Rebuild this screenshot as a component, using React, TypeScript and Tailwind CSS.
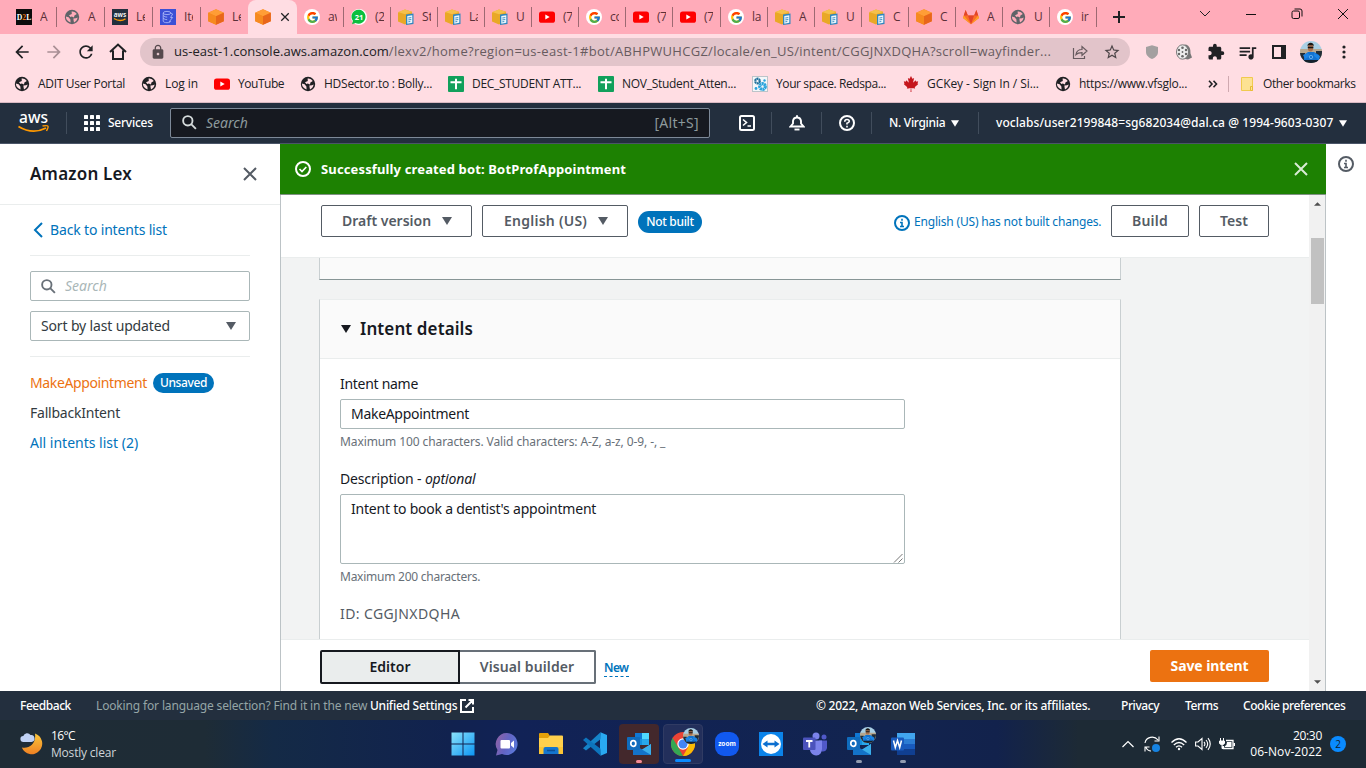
import React from 'react';
import { FcGoogle } from 'react-icons/fc';
import { FaCanadianMapleLeaf } from 'react-icons/fa';
import { MdPublic, MdExtension, MdQueueMusic, MdLock, MdStarBorder, MdRefresh, MdArrowBack, MdArrowForward } from 'react-icons/md';

const Globe = ({ dark }: { dark?: boolean }) => (
  <svg viewBox="0 0 16 16" className="size-4">
    <circle cx="8" cy="8" r="7.2" fill={dark ? '#202124' : '#5f6368'} />
    <path d="M1.8 7.6 4.600 8.200 6.400 10.600 6.600 13.600Q2.200 12 1.800 7.600ZM7.600 2.600Q11 2 12.800 5L10.400 6.600 10 8.400 7.800 7.600 6.400 8 5 6.200 7.800 5Z M9.400 9.400 12 9.200 13.600 8.600Q13.200 12 10 13.400L9.600 11.600Z" fill={dark ? '#ffdde3' : '#ffabb9'} />
  </svg>
);
const Cube = () => (
  <svg viewBox="0 0 16 16" className="size-4">
    <path d="m8 .2 7.800 3.600v8.400L8 15.800.2 12.200V3.800Z" fill="#f58220" />
    <path d="m8 .2 7.800 3.600L8 7.200.2 3.800Z" fill="#ff9d36" />
    <path d="M8 7.200.2 3.800v8.400L8 15.800Z" fill="#f68a1f" />
    <path d="m8 7.200 7.800-3.400v8.400L8 15.800Z" fill="#e8661a" />
  </svg>
);
const YellowBox = () => (
  <svg viewBox="0 0 16 16" className="size-4">
    <path d="m7 .5 7 2.300v9L7 15.500 0 12.500v-9Z" fill="#e9a826" />
    <path d="m0 3 7 2.300L14.500 3 7 .5Z" fill="#f5c04b" />
    <path d="m8 5.500 7.500-1V15L8 16Z" fill="#2f87bf" />
    <path d="m9.300 7 5-.8v7.600l-5 .9Z" fill="#eef7fc" />
    <path d="m10.300 9 3-.4m-3 2.300 3-.4m-3 2.300 2-.3" stroke="#2f87bf" strokeWidth=".9" />
  </svg>
);
const YouTube = () => (
  <svg viewBox="0 0 16 16" className="size-4">
    <rect y="2.400" width="16" height="11.400" rx="2.600" fill="#f00" />
    <path d="M6.300 5.600v5l4.400-2.500Z" fill="#fff" />
  </svg>
);
const Google = () => (
  <span className="flex size-4 items-center justify-center rounded-full bg-white"><FcGoogle className="size-[13px]" /></span>
);
const WhatsApp = () => (
  <svg viewBox="0 0 16 16" className="size-4">
    <circle cx="8" cy="8" r="8" fill="#fff" />
    <path d="M1 15.300 2 12A7 7 0 1 1 4.500 14Z" fill="#0cbf3f" />
    <text x="8" y="10.700" textAnchor="middle" fontSize="7.500" fontWeight="700" fontFamily="Open Sans, sans-serif" fill="#fff">21</text>
  </svg>
);
const Gitlab = () => (
  <svg viewBox="0 0 16 16" className="size-4">
    <path d="M0 9 2.600 1l2.300 5.500h6.200L13.400 1 16 9l-8 6.200Z" fill="#fc6d26" />
    <path d="m4.900 6.500 3.100 8.700 3.100-8.700ZM2.600 1 .8 6.500h4.100ZM13.400 1l1.800 5.500h-4.100Z" fill="#e24329" />
    <path d="M.8 6.500 0 9l8 6.200Zm14.400 0L16 9l-8 6.200Z" fill="#fca326" />
  </svg>
);
const D2L = () => (
  <svg viewBox="0 0 16 16" className="size-4">
    <rect width="16" height="16" fill="#0c0c0c" />
    <text x="8" y="11" textAnchor="middle" textLength="14.500" lengthAdjust="spacingAndGlyphs" fontSize="8.500" fontWeight="700" fontFamily="Liberation Serif, serif" fill="#fff">D<tspan fill="#e87511">2</tspan>L</text>
  </svg>
);
const AwsTiny = () => (
  <svg viewBox="0 0 16 16" className="size-4">
    <rect width="16" height="16" fill="#232f3e" />
    <text x="8" y="7.600" textAnchor="middle" fontSize="6.500" fontWeight="600" fontFamily="Noto Sans, sans-serif" fill="#fff">aws</text>
    <path d="M2 9.500q6 3.800 11.500.4" stroke="#f90" strokeWidth="1.300" fill="none" />
  </svg>
);
const Dynamo = () => (
  <svg viewBox="0 0 16 16" className="size-4">
    <rect width="16" height="16" fill="#3b50d6" />
    <g fill="none" stroke="#b5c0fb" strokeWidth=".8">
      <ellipse cx="7" cy="4" rx="3.800" ry="1.600" />
      <path d="M3.200 4v8c0 1 1.600 1.700 3.800 1.700s3.800-.7 3.800-1.700M3.200 6.700q2 1.500 4 1.400M3.200 9.300q2 1.500 4 1.400M10.800 4l1.800 1-2 3.500h2L9 13" />
    </g>
  </svg>
);
const Sheets = () => (
  <svg viewBox="0 0 16 16" className="size-4">
    <rect width="16" height="16" rx="1" fill="#11a05b" />
    <path d="M2.500 6.200h11M8 2.800v10.400" stroke="#fff" strokeWidth="2" />
  </svg>
);
const Gears = () => (
  <svg viewBox="0 0 16 16" className="size-4">
    <rect x=".5" y=".5" width="15" height="15" fill="#f4f7f9" stroke="#bcc4c9" />
    <circle cx="5.500" cy="5" r="2.300" fill="none" stroke="#1d6f9b" strokeWidth="2.200" strokeDasharray="1.800 .4" />
    <circle cx="10.500" cy="10.500" r="2.800" fill="none" stroke="#2aa3dc" strokeWidth="3.200" strokeDasharray="2 .4" />
    <circle cx="12.500" cy="4.500" r="1.200" fill="#2aa3dc" /><circle cx="4" cy="12.500" r="1.400" fill="#2aa3dc" />
  </svg>
);
const Avatar = ({ cls }: { cls: string }) => (
  <svg viewBox="0 0 22 22" className={cls}>
    <clipPath id="face"><circle cx="11" cy="11" r="11" /></clipPath>
    <g clipPath="url(#face)">
      <rect width="22" height="22" fill="#a9cfe4" />
      <path d="M0 8h22v14H0Z" fill="#b7a78f" />
      <path d="M0 12h5l2 10H0ZM16 10h6v12h-6Z" fill="#222d38" />
      <path d="M4 20V14l4-3h6l5 3v5Z" fill="#1272d0" />
      <path d="m3 14 5-2 2 3-5 3ZM14 12l6 3-1 4-5-4Z" fill="#1a84e6" />
      <path d="M4 19h14v3H4Z" fill="#14202c" />
      <ellipse cx="10.500" cy="6.500" rx="2.800" ry="3.900" fill="#a8714f" />
      <path d="M7.400 5.500C7 .5 14.500.5 13.800 5.500L13 4.300H8Z" fill="#1c1714" />
      <path d="M7.900 5.700h5.400v1.500H7.900Z" fill="#161616" />
      <circle cx="11" cy="16" r="1.700" fill="none" stroke="#7fc1f5" strokeWidth=".7" />
    </g>
  </svg>
);
const Close = ({ cls }: { cls: string }) => (
  <svg viewBox="0 0 16 16" className={cls} fill="none" stroke="currentColor" strokeWidth="2"><path d="m2 2 12 12M14 2 2 14" /></svg>
);
const Lens = ({ cls }: { cls: string }) => (
  <svg viewBox="0 0 16 16" className={cls} fill="none" stroke="currentColor" strokeWidth="2"><circle cx="6.200" cy="6.200" r="5" /><path d="m9.800 9.800 5 5" /></svg>
);
const Caret = ({ cls }: { cls: string }) => (
  <svg viewBox="0 0 10 8" className={cls} fill="currentColor"><path d="M0 0h10L5 8Z" /></svg>
);
const Info = ({ cls }: { cls: string }) => (
  <svg viewBox="0 0 16 16" className={cls} fill="none" stroke="currentColor" strokeWidth="2"><circle cx="8" cy="8" r="7" /><path d="M8 3.800v2M6 7.500h2V12M6 11.500h4" strokeWidth="1.600" /></svg>
);

type Tab = { icon: React.ReactNode; label: string };
const leftTabs: Tab[] = [
  { icon: <D2L />, label: 'A' }, { icon: <Globe />, label: 'A' }, { icon: <AwsTiny />, label: 'Le' }, { icon: <Dynamo />, label: 'Ite' }, { icon: <Cube />, label: 'Le' },
];
const rightTabs: Tab[] = [
  { icon: <Google />, label: 'aw' }, { icon: <WhatsApp />, label: '(2' }, { icon: <YellowBox />, label: 'St' }, { icon: <YellowBox />, label: 'La' }, { icon: <YellowBox />, label: 'U' },
  { icon: <YouTube />, label: '(7' }, { icon: <Google />, label: 'co' }, { icon: <YouTube />, label: '(7' }, { icon: <YouTube />, label: '(7' }, { icon: <Google />, label: 'la' },
  { icon: <YellowBox />, label: 'A' }, { icon: <YellowBox />, label: 'U' }, { icon: <YellowBox />, label: 'C' }, { icon: <Cube />, label: 'C' }, { icon: <Gitlab />, label: 'A' }, { icon: <Globe />, label: 'U' }, { icon: <Google />, label: 'ir' },
];

const TabItem = ({ tab, w, line = true }: { tab: Tab; w: string; line?: boolean }) => (
  <div className={`flex h-5 shrink-0 items-center border-r pl-[7px] ${w} ${line ? 'border-[#9d6972]' : 'border-transparent'}`}>
    <span className="shrink-0">{tab.icon}</span>
    <span className="ml-2 w-[9px] overflow-hidden text-[12px] tracking-[-0.2px] whitespace-nowrap text-[#5b3038]">{tab.label}</span>
  </div>
);

const bookmarks = [
  { icon: <Globe dark />, label: 'ADIT User Portal', w: 'w-[127px]', t: 'tracking-[-0.31px]' },
  { icon: <Globe dark />, label: 'Log in', w: 'w-[73px]', t: 'tracking-[-0.1px]' },
  { icon: <YouTube />, label: 'YouTube', w: 'w-[86px]', t: 'tracking-[-0.47px]' },
  { icon: <Globe dark />, label: 'HDSector.to : Bolly...', w: 'w-[148px]', t: 'tracking-[-0.25px]' },
  { icon: <Sheets />, label: 'DEC_STUDENT ATT...', w: 'w-[150px]', t: 'tracking-[-0.3px]' },
  { icon: <Sheets />, label: 'NOV_Student_Atten...', w: 'w-[154px]', t: 'tracking-[-0.28px]' },
  { icon: <Gears />, label: 'Your space. Redspa...', w: 'w-[151px]', t: 'tracking-[-0.4px]' },
  { icon: <FaCanadianMapleLeaf className="size-4 text-[#c5161d]" />, label: 'GCKey - Sign In / Si...', w: 'w-[152px]', t: 'tracking-[-0.07px]' },
  { icon: <Globe dark />, label: 'https://www.vfsglo...', w: 'w-[153px]', t: 'tracking-[-0.28px]' },
];

function Browser() {
  return (
    <div className="flex h-[103px] shrink-0 flex-col border-b border-[#d9b9c2] bg-[#ffdde3] font-['Open_Sans','Noto_Sans',sans-serif] text-[#202124]">
      <div className="flex h-[34px] shrink-0 items-center bg-[#ffabb9] pl-[9px]">
        {leftTabs.map((t, i) => <TabItem key={i} tab={t} line={i < 4} w={i === 4 ? 'w-[47px]' : 'w-12'} />)}
        <div className="flex h-[34px] w-[49px] shrink-0 items-center gap-[9px] rounded-t-lg bg-[#ffdde3] pl-[7px]">
          <Cube />
          <Close cls="size-2.5" />
        </div>
        {rightTabs.map((t, i) => <TabItem key={i} tab={t} w={i % 17 === 8 ? 'w-12' : 'w-[47px]'} />)}
        <svg viewBox="0 0 12 12" className="ml-4 size-3 shrink-0" stroke="#202124" strokeWidth="2"><path d="M6 0v12M0 6h12" /></svg>
        <svg viewBox="0 0 12 8" className="mt-[-6px] ml-[74px] h-2 w-3 shrink-0" fill="none" stroke="#202124"><path d="m1 1 5 5 5-5" /></svg>
        <svg viewBox="0 0 12 12" className="mt-[-6px] ml-[34px] size-3 shrink-0" stroke="#111"><path d="M1 6.500h10" /></svg>
        <svg viewBox="0 0 12 12" className="mt-[-6px] ml-[34px] size-3 shrink-0" fill="none" stroke="#111"><rect x="1" y="3" width="7.500" height="7.500" rx="1.500" /><path d="M3.500 1H9q2 0 2 2v5.500" /></svg>
        <svg viewBox="0 0 12 12" className="mt-[-6px] ml-[34px] size-3 shrink-0" stroke="#111"><path d="m1 1 10 10M11 1 1 11" /></svg>
      </div>
      <div className="flex h-9 shrink-0 items-center pl-3">
        <MdArrowBack className="size-5" />
        <MdArrowForward className="ml-3 size-5 text-[#a98f95]" />
        <MdRefresh className="ml-3 size-5" />
        <svg viewBox="0 0 20 20" className="ml-3 size-5" fill="none" stroke="currentColor" strokeWidth="2"><path d="m2 10 8-7.500 8 7.500M5 8.500v8.500h10V8.500" /></svg>
        <div className="ml-3 flex h-7 w-[990px] items-center rounded-full bg-[#e2c4ca] pl-[10px]">
          <MdLock className="size-4 text-[#54484c]" />
          <div className="ml-2 w-[878px] text-[13px] whitespace-nowrap text-[#675b5f]"><span className="tracking-[0.04px] text-[#202124]">us-east-1.console.aws.amazon.com</span><span className="tracking-[0.29px]">/lexv2/home?region=us-east-1#bot/ABHPWUHCGZ/locale/en_US/intent/CGGJNXDQHA?scroll=wayfinder...</span></div>
          <svg viewBox="0 0 16 16" className="ml-5 size-4" fill="none" stroke="#665a5e" strokeWidth="1.200"><path d="M1.500 4v10.500h11V12M4 10.500c.5-3.500 2.500-5 6-5V2.500L15 7l-5 4.500V8.700c-3 0-4.700.5-6 1.800Z" /></svg>
          <MdStarBorder className="ml-[15px] size-[18px] text-[#4d4548]" />
        </div>
        <svg viewBox="0 0 16 16" className="ml-[14px] size-4"><path d="M8 1.200 14 3v5c0 3.500-3 5.800-6 7-3-1.200-6-3.500-6-7V3Z" fill="#a3a0a0" /></svg>
        <svg viewBox="0 0 16 16" className="ml-4 size-4"><path d="M7 1 10 .5q5 2 4.500 9l1.500 4-4 2-4-.7Z" fill="#777" /><ellipse cx="6.500" cy="8" rx="6" ry="7.200" fill="#eee" stroke="#777" /><g fill="#666"><circle cx="6.500" cy="8" r=".9" /><circle cx="6.500" cy="3.700" r="1.300" /><circle cx="6.500" cy="12.300" r="1.300" /><circle cx="3" cy="6" r="1.200" /><circle cx="10" cy="6" r="1.200" /><circle cx="3" cy="10" r="1.200" /><circle cx="10" cy="10" r="1.200" /></g></svg>
        <MdExtension className="ml-[15px] size-[18px]" />
        <MdQueueMusic className="ml-3 size-[21px]" />
        <svg viewBox="0 0 14 14" className="ml-[14px] size-3.5"><path fillRule="evenodd" d="M0 0h14v14H0ZM2 2v10h7V2Z" fill="#202124" /></svg>
        <Avatar cls="ml-[14px] size-[22px]" />
        <svg viewBox="0 0 4 14" className="ml-[20px] h-3.5 w-1" fill="#202124"><circle cx="2" cy="2" r="1.600" /><circle cx="2" cy="7" r="1.600" /><circle cx="2" cy="12" r="1.600" /></svg>
      </div>
      <div className="flex h-[28px] shrink-0 items-center pl-[14px] text-[12px] whitespace-nowrap">
        {bookmarks.map((b) => (
          <div key={b.label} className={`flex shrink-0 items-center gap-2 ${b.w}`}>
            <span className="shrink-0">{b.icon}</span>
            <span className={b.t}>{b.label}</span>
          </div>
        ))}
        <svg viewBox="0 0 10 8" className="h-2 w-2.5 shrink-0" fill="none" stroke="#202124" strokeWidth="1.600"><path d="m1 .8 3 3.200-3 3.200M5.500.8l3 3.200-3 3.200" /></svg>
        <span className="ml-[10px] h-4 w-px bg-[#cfa9b0]" />
        <svg viewBox="0 0 12 14" className="ml-3 h-3.5 w-3 shrink-0"><path d="M.5.500h11v13H.5Z" fill="#fde293" stroke="#f0ca4e" /><path d="M9.500 9.500h2v4h-2Z" fill="#fde293" stroke="#e8bb35" /></svg>
        <span className="ml-[10px] tracking-[-0.4px]">Other bookmarks</span>
      </div>
    </div>
  );
}

function AwsHeader() {
  return (
    <div className="flex h-[41px] shrink-0 items-center border-b border-[#4a5568] bg-[#232f3e] font-medium whitespace-nowrap text-white">
      <svg viewBox="0 0 32 22" className="ml-[18px] h-[22px] w-8">
        <text x="15.500" y="11" textAnchor="middle" textLength="29" lengthAdjust="spacingAndGlyphs" fontSize="17" fontWeight="500" fontFamily="Noto Sans, sans-serif" fill="#fff">aws</text>
        <path d="M.5 14.500q14 8.500 27.500 1.500" fill="none" stroke="#f90" strokeWidth="1.900" /><path d="M24.500 14q5-.8 5.500.2t-1.500 4.800" fill="none" stroke="#f90" strokeWidth="1.400" />
      </svg>
      <span className="ml-4 h-[22px] w-px bg-[#414d5c]" />
      <svg viewBox="0 0 16 16" className="ml-[17px] size-4" fill="#fff">{[0, 6, 12].map((y) => [0, 6, 12].map((x) => <rect key={`${x}-${y}`} x={x} y={y} width="4" height="4" rx=".6" />))}</svg>
      <span className="ml-2 w-[62px] text-[12px] tracking-[-0.25px]">Services</span>
      <div className="flex h-[30px] w-[540px] items-center rounded-[2px] border border-[#7d8998] bg-[#161920] px-[10px] pb-px text-[14px] font-normal text-[#8d9a9c]">
        <Lens cls="ml-px size-[15px] text-[#d5dbdb]" />
        <span className="ml-[9px] flex-1 italic">Search</span>
        <span className="tracking-[0.3px]">[Alt+S]</span>
      </div>
      <svg viewBox="0 0 16 16" className="ml-[29px] size-4" fill="none" stroke="#fff" strokeWidth="2"><rect x="1" y="1" width="14" height="14" rx="1.500" /><path d="m4 4.500 3.500 3L4 10.500M8.500 11H12" strokeWidth="1.600" /></svg>
      <span className="ml-4 h-[22px] w-px bg-[#414d5c]" />
      <svg viewBox="0 0 16 16" className="ml-[17px] size-4" fill="none" stroke="#fff" strokeWidth="1.900"><path d="M8 .2v2M1.500 11.500 4 8.500V6Q4.500 2.500 8 2.500T12 6v2.500l2.500 3Z" /><path d="M5.500 14.500h5" /></svg>
      <span className="ml-4 h-[22px] w-px bg-[#414d5c]" />
      <svg viewBox="0 0 16 16" className="ml-[17px] size-4" fill="none" stroke="#fff" strokeWidth="2"><circle cx="8" cy="8" r="7" /><path d="M5.700 6.700Q5.800 4.500 8 4.500t2.300 1.800Q10.300 7.500 8 8.300v1.300M8 10.800v1.700" strokeWidth="1.600" /></svg>
      <span className="ml-4 h-[22px] w-px bg-[#414d5c]" />
      <span className="ml-[17px] w-[62px] text-[12px] tracking-[-0.3px]">N. Virginia</span>
      <Caret cls="h-[7px] w-2" />
      <span className="ml-[19px] h-[22px] w-px bg-[#414d5c]" />
      <span className="ml-[17px] w-[343px] text-[12px] tracking-[0.07px]">voclabs/user2199848=sg682034@dal.ca @ 1994-9603-0307</span>
      <Caret cls="h-[7px] w-2" />
    </div>
  );
}

function Sidebar() {
  return (
    <div className="w-[280px] shrink-0 bg-white text-[14px] text-[#333b40]">
      <div className="flex h-[61px] items-center justify-between border-b border-[#eaeded] pr-[22px] pl-[30px]">
        <span className="text-[17px] font-semibold tracking-[0.2px] text-[#16191f]">Amazon Lex</span>
        <Close cls="size-4 text-[#545b64]" />
      </div>
      <div className="px-[30px]">
        <div className="flex h-[51px] items-center border-b border-[#eaeded] text-[#0073bb]">
          <svg viewBox="0 0 10 16" className="ml-[3px] h-4 w-2.5" fill="none" stroke="currentColor" strokeWidth="2"><path d="M9 1 2 8l7 7" /></svg>
          <span className="mb-0.5 ml-[7px] tracking-[-0.16px]">Back to intents list</span>
        </div>
        <div className="mt-[15px] flex h-[30px] items-center rounded-[2px] border border-[#aab7b8] px-[10px]">
          <Lens cls="size-[15px] text-[#687078]" />
          <span className="mb-0.5 ml-[9px] text-[#aab7b8] italic">Search</span>
        </div>
        <div className="mt-[10px] flex h-[30px] items-center justify-between rounded-[2px] border border-[#aab7b8] pr-[13px] pl-[10px]">
          <span className="mb-0.5 tracking-[-0.15px]">Sort by last updated</span>
          <Caret cls="h-2 w-2.5 text-[#545b64]" />
        </div>
        <div className="mt-[15px] border-t border-[#eaeded]" />
        <div className="mt-[15px] flex h-[22px] items-center">
          <span className="mb-0.5 w-[123px] tracking-[-0.37px] text-[#ec7211]">MakeAppointment</span>
          <span className="flex h-5 w-[61px] items-center justify-center rounded-full bg-[#0073bb] text-[12px] font-medium tracking-[-0.4px] text-white">Unsaved</span>
        </div>
        <div className="mt-[8px] leading-[22px] tracking-[-0.22px]">FallbackIntent</div>
        <div className="mt-[8px] leading-[22px] text-[#0073bb]">All intents list (2)</div>
      </div>
    </div>
  );
}

function Content() {
  return (
    <div className="flex w-[1046px] shrink-0 flex-col border-x border-[#bcc3c6]">
      <div className="-mx-px flex h-[51px] shrink-0 items-center border-b border-[#7f9183] bg-[#1d8102] pr-[17px] pl-[15px] text-white">
        <svg viewBox="0 0 16 16" className="size-4" fill="none" stroke="#fff" strokeWidth="2"><circle cx="8" cy="8" r="7" /><path d="m4.500 8 2.500 2.500 4.300-4.500" strokeWidth="1.700" /></svg>
        <span className="mt-px ml-[10px] flex-1 text-[13px] font-bold tracking-[0.14px]">Successfully created bot: BotProfAppointment</span>
        <Close cls="size-4 text-[#d9ecd5]" />
      </div>
      <div className="flex min-h-0 flex-1">
        <div className="flex w-[1028px] flex-col">
          <div className="flex h-[63px] shrink-0 items-start border-b border-[#eaeded] bg-white pt-[10px] pl-10 text-[14px] font-semibold whitespace-nowrap text-[#545b64]">
            <div className="flex h-8 w-[151px] items-center rounded-[2px] border border-[#545b64] pl-5"><span className="mb-0.5 w-[100px]">Draft version</span><Caret cls="h-2 w-2.5" /></div>
            <div className="ml-[10px] flex h-8 w-[146px] items-center rounded-[2px] border border-[#545b64] pl-[21px]"><span className="mb-0.5 w-[94px] tracking-[0.25px]">English (US)</span><Caret cls="h-2 w-2.5" /></div>
            <span className="mt-[6px] ml-[10px] flex h-[22px] w-16 items-center justify-center rounded-full bg-[#0073bb] text-[12px] font-medium tracking-[-0.3px] text-white">Not built</span>
            <Info cls="mt-[10px] ml-48 size-4 text-[#0073bb]" />
            <span className="mt-[7px] ml-1 w-[197px] text-[12px] leading-5 font-normal tracking-[-0.18px] text-[#0073bb]">English (US) has not built changes.</span>
            <div className="flex h-8 w-[78px] items-center justify-center rounded-[2px] border border-[#545b64] pb-0.5 tracking-[0.2px]">Build</div>
            <div className="ml-[10px] flex h-8 w-[70px] items-center justify-center rounded-[2px] border border-[#545b64] pb-0.5 tracking-[0.1px]">Test</div>
          </div>
          <div className="min-h-0 flex-1 overflow-hidden bg-[#f2f3f3] pl-[38px]">
            <div className="h-[22px] w-[802px] border-x border-b border-x-[#c9cfd1] border-b-[#879596] bg-[#fafafa]" />
            <div className="mt-[19px] h-[400px] w-[802px] border border-[#c9cfd1] border-t-[#eaeded] bg-white text-[14px] text-[#16191f]">
              <div className="flex h-[59px] items-center border-b border-[#eaeded] bg-[#fafafa] pl-[21px]">
                <Caret cls="h-2 w-2.5" />
                <span className="mb-px ml-[9px] text-[17px] font-semibold tracking-[0.1px]">Intent details</span>
              </div>
              <div className="pt-[14px] pl-[20px]">
                <div className="leading-[22px] tracking-[-0.29px]">Intent name</div>
                <div className="mt-[4px] flex h-[30px] w-[565px] items-center rounded-[2px] border border-[#aab7b8] pb-px pl-[10px] tracking-[-0.3px]">MakeAppointment</div>
                <div className="mt-[3px] text-[12px] leading-5 tracking-[-0.1px] text-[#687078]">Maximum 100 characters. Valid characters: A-Z, a-z, 0-9, -, _</div>
                <div className="mt-[16px] leading-[22px] tracking-[-0.16px]">Description - <i>optional</i></div>
                <div className="relative mt-[4px] h-[70px] w-[565px] rounded-[2px] border border-[#aab7b8] pt-[3px] pl-[10px] leading-[22px] tracking-[-0.22px]">
                  Intent to book a dentist's appointment
                  <svg viewBox="0 0 10 10" className="absolute right-px bottom-0 size-2.5" stroke="#777"><path d="M1 9.500 9.500 1M5.500 9.500l4-4" /></svg>
                </div>
                <div className="mt-[3px] text-[12px] leading-5 tracking-[-0.25px] text-[#687078]">Maximum 200 characters.</div>
                <div className="mt-[16px] leading-[22px] tracking-[0.4px] text-[#545b64]">ID: CGGJNXDQHA</div>
              </div>
            </div>
          </div>
          <div className="flex h-[52px] shrink-0 items-start border-t border-[#eaeded] bg-white pt-[10px] pr-10 pl-[39px] text-[14px] font-semibold">
            <div className="flex h-[34px] w-[140px] items-center justify-center rounded-l-[2px] border-2 border-[#16191f] bg-[#eaeded] pb-px tracking-[0.05px] text-[#16191f]">Editor</div>
            <div className="flex h-[34px] w-[136px] items-center justify-center rounded-r-[2px] border-2 border-l-0 border-[#687078] pb-px tracking-[0.1px] text-[#545b64]">Visual builder</div>
            <span className="mt-[9px] ml-2 h-[18px] w-[25px] border-b border-dashed border-[#0073bb] text-[12px] leading-[17px] tracking-[-0.6px] text-[#0073bb]">New</span>
            <div className="ml-auto flex h-8 w-[119px] items-center justify-center rounded-[2px] bg-[#ec7211] pb-px font-bold tracking-[-0.1px] text-white">Save intent</div>
          </div>
        </div>
        <div className="flex w-4 flex-col items-center bg-[#f1f1f1] text-[#505050]">
          <svg viewBox="0 0 8 4" className="mt-[7px] h-1 w-[7px]" fill="currentColor"><path d="M0 4h8L4 0Z" /></svg>
          <div className="mt-8 h-[66px] w-[13px] bg-[#c1c1c1]" />
          <svg viewBox="0 0 8 4" className="mt-auto mb-[7px] h-1 w-[7px]" fill="currentColor"><path d="M0 0h8L4 4Z" /></svg>
        </div>
      </div>
    </div>
  );
}

const Mail = () => (
  <svg viewBox="0 0 24 24" className="size-6">
    <path d="M8 1h14v12H8Z" fill="#1490df" /><path d="M15 1h7v6h-7Z" fill="#50d9ff" /><path d="M15 7h7v6h-7Z" fill="#28a8ea" /><path d="M8 1h7v6H8Z" fill="#0f78d4" />
    <path d="m6 12 9 6 9-6v11H6Z" fill="#1ba5e8" /><path d="m24 12-18 11h18Z" fill="#3aaeea" /><path d="m6 12 18 11H6Z" fill="#1373c9" />
    <rect y="5" width="13" height="13" rx="1" fill="#0f6cbd" />
    <ellipse cx="6.300" cy="11.500" rx="2.500" ry="2.900" fill="none" stroke="#fff" strokeWidth="1.700" />
  </svg>
);
const taskIcons = [
  { bar: '', bg: '', el: <svg viewBox="0 0 24 24" className="size-6"><linearGradient id="win" x2="1" y2="1"><stop stopColor="#8be3fb" /><stop offset="1" stopColor="#0c96f4" /></linearGradient><path d="M.5.500h11v11H.5ZM12.500.500h11v11h-11ZM.5 12.500h11v11H.5ZM12.500 12.500h11v11h-11Z" fill="url(#win)" /></svg> },
  { bar: '', bg: '', el: <svg viewBox="0 0 24 24" className="size-6"><linearGradient id="chat" x1="0" y1=".3" x2="1" y2=".7"><stop stopColor="#8c62a8" /><stop offset=".5" stopColor="#6264c4" /><stop offset="1" stopColor="#5a7bdc" /></linearGradient><path d="M12 1a11 11 0 1 1-5 21l-6 1.500L2.500 18A11 11 0 0 1 12 1Z" fill="url(#chat)" /><rect x="5.500" y="8" width="9.500" height="8.500" rx="1" fill="#fff" /><path d="m16 11 3-2.500V16l-3-2.500Z" fill="#fff" /></svg> },
  { bar: '', bg: '', el: <svg viewBox="0 0 24 24" className="size-6"><path d="M0 2q0-1 1-1h8l2 3v5H0Z" fill="#e3a008" /><path d="M0 6h9l2-2.500h12q1 0 1 1V22H0Z" fill="#ffd04c" /><path d="M0 15h24v7H0Z" fill="#fbc535" /><path d="M4.500 22v-5q0-2 2-2h11q2 0 2 2v5Z" fill="#1476cf" /><path d="M8 18.500h8" stroke="#0b4f96" strokeWidth="1.500" /></svg> },
  { bar: '', bg: '', el: <svg viewBox="0 0 24 24" className="size-6"><path d="M17.500.2 24 3v18l-6.500 2.800-.5-6.300V6.500Z" fill="#29a9f2" /><path d="M17.500.2v7L3 18.500l-3-2.300Z" fill="#1583c9" /><path d="m0 8 3-2.500 14.500 11.300v7Z" fill="#0d74bd" /></svg> },
  { bar: 'w-1.5 bg-[#f48b97]', bg: 'bg-[#43282c]', el: <Mail /> },
  { bar: 'w-4 bg-[#0a8bff]', bg: 'bg-[#232f5b] border border-[#303b63]', badge: true, el: <svg viewBox="0 0 24 24" className="size-6"><circle cx="12" cy="12" r="12" fill="#ea4335" /><path d="M1.600 6 7 15l5 9A12 12 0 0 1 1.600 6Z" fill="#34a853" /><path d="M22.400 6H12l5.200 9L12 24A12 12 0 0 0 22.400 6Z" fill="#fbbc04" /><circle cx="12" cy="12" r="5.700" fill="#fff" /><circle cx="12" cy="12" r="4.500" fill="#4285f4" /></svg> },
  { bar: '', bg: '', el: <div className="flex size-6 items-center justify-center rounded-[9px] bg-[#1159ef] font-['Open_Sans',sans-serif] text-[6.5px] leading-none font-bold text-white">zoom</div> },
  { bar: '', bg: '', el: <svg viewBox="0 0 24 24" className="size-6"><rect width="24" height="24" fill="#0b83ea" /><circle cx="12" cy="12" r="10" fill="#fff" /><path d="m3.500 12 5-3.500v2.300h7V8.500l5 3.500-5 3.500v-2.300h-7v2.300Z" fill="#0c6fd0" /></svg> },
  { bar: '', bg: '', el: <svg viewBox="0 0 24 24" className="size-6"><circle cx="13" cy="4" r="3.500" fill="#7b83eb" /><circle cx="21" cy="5" r="2.500" fill="#5059c9" /><path d="M16 8.500h8V16q-1 4-5 3.500Z" fill="#5059c9" /><path d="M7 8.500h12V17a6 6 0 0 1-12 1Z" fill="#7b83eb" /><rect y="5.500" width="12.500" height="12.500" rx="1" fill="#4b53bc" /><path d="M3 9h6.500M6.250 9v6.500" stroke="#fff" strokeWidth="1.800" /></svg> },
  { bar: 'w-1.5 bg-[#929cb0]', bg: '', badge: true, el: <Mail /> },
  { bar: 'w-1.5 bg-[#929cb0]', bg: '', el: <svg viewBox="0 0 24 24" className="size-6"><path d="M6 1h18v6H6Z" fill="#41a5ee" /><path d="M6 7h18v5H6Z" fill="#2b7cd3" /><path d="M6 12h18v5H6Z" fill="#185abd" /><path d="M6 17h18v6H6Z" fill="#103f91" /><rect y="5.500" width="13" height="13" rx="1" fill="#185abd" /><path d="m2.500 8.500 1.800 7 2.200-7 2.200 7 1.800-7" fill="none" stroke="#fff" strokeWidth="1.500" /></svg> },
];

function Taskbar() {
  return (
    <div className="flex h-12 shrink-0 items-center bg-[linear-gradient(90deg,#1f2c36_0%,#1e2c36_15%,#142a46_20%,#11224f_33%,#112256_38%,#12244f_65%,#12224c_73%,#1d2a35_79%)] font-['Open_Sans','Noto_Sans',sans-serif] text-[12px] text-white">
      <svg viewBox="0 0 24 24" className="ml-5 size-6"><linearGradient id="moon" x2="0" y2="1"><stop stopColor="#fbc83c" /><stop offset="1" stopColor="#ef8123" /></linearGradient><path d="M15 1.500a10.600 10.600 0 1 1-13.200 14C9 17 16.500 12 15 1.500Z" fill="url(#moon)" /><path d="M3.500 10a3 3 0 0 1-.2-6A4 4 0 0 1 10.500 3a3.500 3.500 0 0 1 1 7Z" fill="#c0d2f5" /></svg>
      <div className="ml-[7px] w-[390px] leading-4"><div className="tracking-[-0.6px]">16°C</div><div className="mt-px tracking-[-0.2px] text-[#cfd4d8]">Mostly clear</div></div>
      {taskIcons.map((t, i) => (
        <div key={i} className="flex w-11 shrink-0 justify-center">
          <div className={`relative flex size-10 items-center justify-center rounded ${t.bg}`}>
            {t.el}
            {t.badge && <Avatar cls="absolute top-[3px] right-[3px] size-4" />}
            {t.bar && <span className={`absolute bottom-px h-[3px] rounded-full ${t.bar}`} />}
          </div>
        </div>
      ))}
      <svg viewBox="0 0 12 8" className="ml-[197px] h-2 w-3" fill="none" stroke="#fff" strokeWidth="1.200"><path d="m.5 7 5.500-5.500L11.500 7" /></svg>
      <svg viewBox="0 0 18 18" className="ml-[9px] size-[18px]" fill="none" stroke="#fff" strokeWidth="1.100"><path d="M2 8c1-6 9-8 13-3M16 1.500V6h-4.500M8 16c-2 0-4-1.500-5-3.500M2 16.500V12h4.500" /><circle cx="13" cy="13" r="4" fill="#1683e2" stroke="none" /></svg>
      <svg viewBox="0 0 16 14" className="ml-[10px] h-3.5 w-4" fill="none" stroke="#fff" strokeWidth="1.300"><path d="M.5 5.500q7.500-7.500 15 0M2.800 8q5.200-5 10.400 0M5 10.300q3-2.800 6 0" /><circle cx="8" cy="12" r="1.200" fill="#fff" stroke="none" /></svg>
      <svg viewBox="0 0 16 14" className="ml-2 h-3.5 w-4" fill="none" stroke="#fff" strokeWidth="1.100"><path d="M.6 5v4H3l4 3.500v-11L3 5ZM9 4.800q1.800 2.200 0 4.400M11 3q3.300 4 0 8M13 1.200q4.500 5.800 0 11.600" /></svg>
      <svg viewBox="0 0 16 14" className="ml-2 h-3.5 w-4"><path d="M1.500 1v3M4.500 1v3M.5 4h5v2q0 1.500-2.500 1.500T.5 6Zm2.500 4v3.500h2" fill="#fff" stroke="#fff" /><path d="M7 3.500h7v8H4.500V9" fill="none" stroke="#fff" strokeWidth="1.300" /><path d="M8 5h4.500v5H6V9q2-1 2-4ZM14.500 6H16v3h-1.500Z" fill="#fff" /></svg>
      <div className="ml-auto text-right leading-4"><div className="tracking-[-0.3px]">20:30</div><div className="tracking-[0.05px]">06-Nov-2022</div></div>
      <span className="mr-5 ml-2 flex size-4 items-center justify-center rounded-full bg-[#0a8bff] text-[10px] leading-none text-[#10202e]">2</span>
    </div>
  );
}

export default function App() {
  return (
    <div className="flex h-[768px] w-[1366px] flex-col overflow-hidden bg-white font-['Noto_Sans',sans-serif]">
      <Browser />
      <AwsHeader />
      <div className="flex h-[547px] shrink-0">
        <Sidebar />
        <Content />
        <div className="flex flex-1 justify-center bg-white pt-3"><Info cls="size-4 text-[#545b64]" /></div>
      </div>
      <div className="flex h-[29px] shrink-0 items-center bg-[#232f3e] pr-5 pl-5 text-[12px] font-medium whitespace-nowrap text-white">
        <span className="w-[76px] tracking-[-0.45px]">Feedback</span>
        <span className="w-[274px] font-normal tracking-[-0.15px] text-[#95a5a6]">Looking for language selection? Find it in the new </span>
        <span className="w-[90px] tracking-[-0.25px]">Unified Settings</span>
        <svg viewBox="0 0 14 14" className="size-3.5" fill="none" stroke="#fff" strokeWidth="2"><path d="M6 1H1v12h12V8M8.500 1H13v4.500M13 1 5.500 8.500" /></svg>
        <span className="ml-auto w-[305px] tracking-[-0.25px]">© 2022, Amazon Web Services, Inc. or its affiliates.</span>
        <span className="w-16 tracking-[-0.4px]">Privacy</span>
        <span className="w-[58px] tracking-[-0.4px]">Terms</span>
        <span className="w-[103px] tracking-[-0.45px]">Cookie preferences</span>
      </div>
      <Taskbar />
    </div>
  );
}
